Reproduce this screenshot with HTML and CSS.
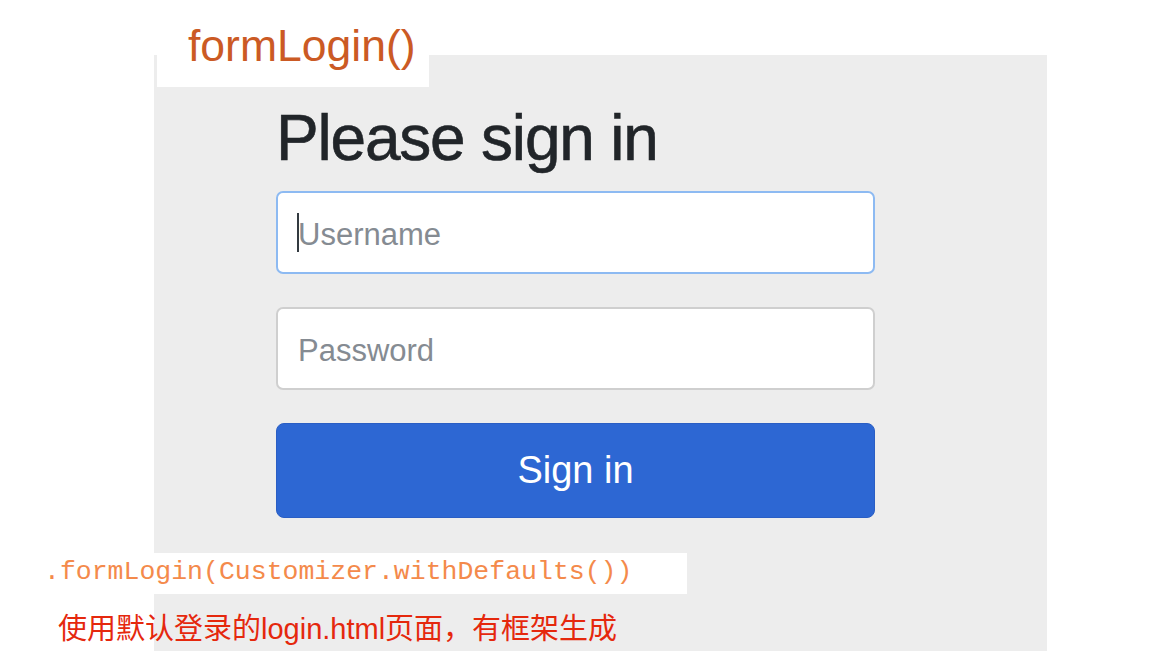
FILE: index.html
```html
<!DOCTYPE html>
<html lang="zh-CN">
<head>
<meta charset="utf-8">
<title>formLogin()</title>
<link rel="stylesheet" href="styles.css">
</head>
<body>
<div class="stage">
  <div class="panel">
    <form class="signin">
      <h2 class="signin-title">Please sign in</h2>
      <div class="field field-focus">
        <input class="field-input" type="text" placeholder="Username">
        <span class="caret"></span>
      </div>
      <div class="field">
        <input class="field-input" type="password" placeholder="Password">
      </div>
      <button class="signin-btn" type="button">Sign in</button>
    </form>
  </div>
  <div class="tag">formLogin()</div>
  <div class="code">.formLogin(Customizer.withDefaults())</div>
  <div class="note">使用默认登录的login.html页面，有框架生成</div>
</div>
</body>
</html>
```
FILE: styles.css
```css
html, body {
  margin: 0;
  padding: 0;
  background: #ffffff;
}
.stage {
  position: relative;
  width: 1158px;
  height: 667px;
  overflow: hidden;
  font-family: "Liberation Sans", Arial, sans-serif;
}
.panel {
  margin: 55px 0 0 154px;
  width: 893px;
  height: 596px;
  box-sizing: border-box;
  padding: 45px 0 0 122px;
  background: #ededed;
}
.signin {
  width: 599px;
  display: flex;
  flex-direction: column;
}
.signin-title {
  margin: 0 0 15px 0;
  font-size: 64px;
  line-height: 76px;
  font-weight: 400;
  letter-spacing: -1.2px;
  color: #212529;
  -webkit-text-stroke: 0.6px #212529;
}
.field {
  position: relative;
  margin-bottom: 33px;
}
.field-input {
  display: block;
  width: 100%;
  height: 83px;
  box-sizing: border-box;
  border: 2px solid #cfcfcf;
  border-radius: 7px;
  background: #ffffff;
  padding: 4px 20px 0 20px;
  font-family: "Liberation Sans", Arial, sans-serif;
  font-size: 31px;
  color: #495057;
  outline: none;
}
.field-focus .field-input {
  border-color: #8dbaf2;
}
.field-input::placeholder {
  color: #858b92;
  opacity: 1;
}
.caret {
  position: absolute;
  left: 21px;
  top: 22px;
  width: 2px;
  height: 39px;
  background: #333a40;
}
.signin-btn {
  height: 95px;
  width: 100%;
  border: 1px solid #2a5ec4;
  border-radius: 8px;
  background: #2d67d3;
  color: #ffffff;
  font-family: "Liberation Sans", Arial, sans-serif;
  font-size: 38px;
  padding: 0 0 0 0;
}
.tag {
  position: absolute;
  left: 157px;
  top: 18px;
  width: 272px;
  height: 69px;
  box-sizing: border-box;
  padding: 2px 0 0 31px;
  background: #ffffff;
  font-size: 44.5px;
  line-height: 52px;
  color: #cb5a24;
}
.code {
  position: absolute;
  left: 0;
  top: 553px;
  width: 687px;
  height: 41px;
  box-sizing: border-box;
  padding-left: 44px;
  background: #ffffff;
  font-family: "Liberation Mono", "Courier New", monospace;
  font-size: 26.5px;
  line-height: 38px;
  color: #f48a4b;
}
.note {
  position: absolute;
  left: 58px;
  top: 609px;
  font-family: "Liberation Sans", "Noto Sans CJK SC", sans-serif;
  font-size: 29px;
  line-height: 40px;
  color: #e5280d;
  white-space: nowrap;
}
```
